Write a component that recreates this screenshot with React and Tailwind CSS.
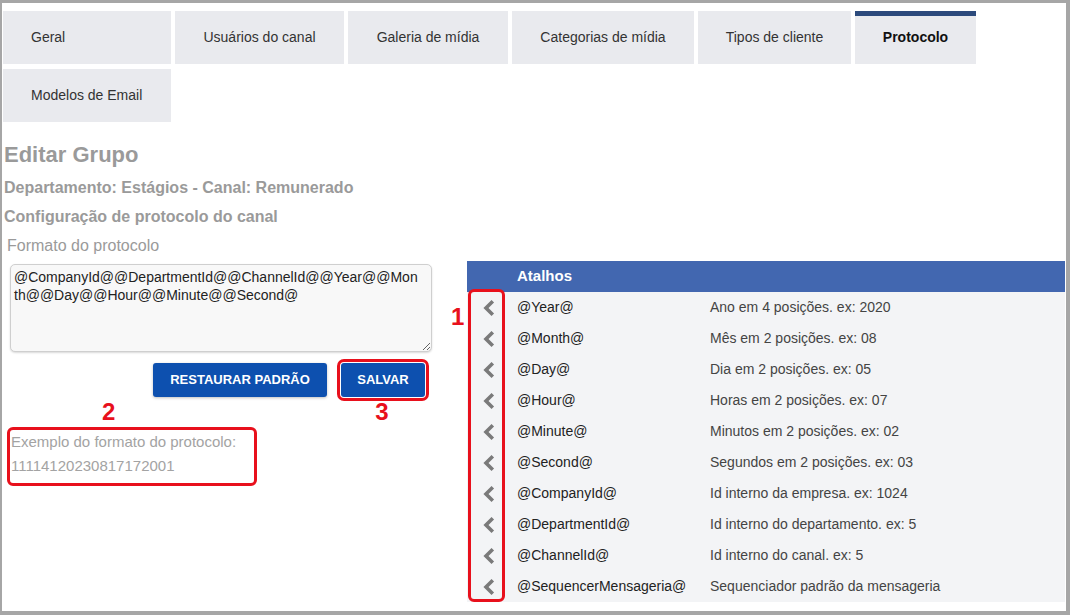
import { useState } from "react";

const TABS = [
  { label: "Geral", cls: "w-[168px] justify-start pl-[28px]" },
  { label: "Usuários do canal", cls: "w-[169px] justify-center" },
  { label: "Galeria de mídia", cls: "w-[160px] justify-center" },
  { label: "Categorias de mídia", cls: "w-[182px] justify-center" },
  { label: "Tipos de cliente", cls: "w-[153px] justify-center" },
  { label: "Protocolo", cls: "w-[121px] justify-center" },
  { label: "Modelos de Email", cls: "w-[168px] justify-start pl-[28px]" },
];

const SHORTCUTS = [
  ["@Year@", "Ano em 4 posições. ex: 2020"],
  ["@Month@", "Mês em 2 posições. ex: 08"],
  ["@Day@", "Dia em 2 posições. ex: 05"],
  ["@Hour@", "Horas em 2 posições. ex: 07"],
  ["@Minute@", "Minutos em 2 posições. ex: 02"],
  ["@Second@", "Segundos em 2 posições. ex: 03"],
  ["@CompanyId@", "Id interno da empresa. ex: 1024"],
  ["@DepartmentId@", "Id interno do departamento. ex: 5"],
  ["@ChannelId@", "Id interno do canal. ex: 5"],
  ["@SequencerMensageria@", "Sequenciador padrão da mensageria"],
];

const DEFAULT_FORMAT =
  "@CompanyId@@DepartmentId@@ChannelId@@Year@@Month@@Day@@Hour@@Minute@@Second@";

function ChevronLeft() {
  return (
    <svg width="13" height="18" viewBox="0 0 13 18" fill="none">
      <path
        d="M10.8 2.3 L4 9 L10.8 15.7"
        stroke="#7a7a7a"
        strokeWidth="3.6"
        strokeLinejoin="miter"
      />
    </svg>
  );
}

export default function App() {
  const [active, setActive] = useState("Protocolo");
  const [format, setFormat] = useState(DEFAULT_FORMAT);

  return (
    <div
      className="w-[1070px] h-[615px] overflow-hidden bg-white border-t-[3px] border-l-2 border-r-4 border-b-4 border-[#a6a6a6] text-[#333]"
      style={{ fontFamily: '"Liberation Sans", Arial, sans-serif' }}
    >
      {/* TABS */}
      <div className="flex flex-wrap gap-x-1 gap-y-[5px] pt-2 pl-px">
        {TABS.map((t) => (
          <button
            key={t.label}
            onClick={() => setActive(t.label)}
            className={`flex items-center h-[53px] bg-[#e9eaee] text-[14px] ${t.cls} ${
              active === t.label
                ? "font-bold text-[#111] shadow-[inset_0_5px_0_#2c4a7c]"
                : "text-[#333]"
            }`}
          >
            {t.label}
          </button>
        ))}
      </div>

      <h1 className="mt-5 ml-[2px] text-[22px] leading-[26px] font-bold text-[#9a9a9a]">
        Editar Grupo
      </h1>
      <h2 className="mt-[10px] ml-[2px] text-[16px] leading-5 font-bold text-[#9a9a9a]">
        Departamento: Estágios - Canal: Remunerado
      </h2>
      <h3 className="mt-[9px] ml-[2px] text-[16px] leading-5 font-bold text-[#9a9a9a]">
        Configuração de protocolo do canal
      </h3>

      <div className="flex">
        {/* LEFT */}
        <div className="w-[465px] shrink-0">
          <label className="block mt-[9px] ml-[5px] text-[16px] leading-5 text-[#9a9a9a]">
            Formato do protocolo
          </label>
          <textarea
            value={format}
            onChange={(e) => setFormat(e.target.value)}
            className="block mt-2 ml-2 w-[422px] h-[88px] pl-[3px] pr-[10px] pt-[3px] text-[14px] leading-[18px] text-[#222] bg-[#f8f8f8] border border-[#cfcfcf] rounded-[5px] shadow-[0_1px_2px_rgba(0,0,0,0.15)] outline-none"
          />

          <div className="flex gap-[14px] mt-[11px] ml-[151px]">
            <button
              onClick={() => setFormat(DEFAULT_FORMAT)}
              className="w-[174px] h-[34px] rounded-[3px] bg-[#0d50af] text-white text-[13px] font-bold shadow-[0_1px_3px_rgba(0,0,0,0.25)]"
            >
              RESTAURAR PADRÃO
            </button>
            <button className="w-[84px] h-[34px] rounded-[3px] bg-[#0d50af] text-white text-[13px] font-bold outline-[3px] outline-solid outline-[#e8101c] outline-offset-1">
              SALVAR
            </button>
          </div>

          <div className="flex mt-[3px] text-[24px] leading-6 font-bold text-[#e8101c]">
            <span className="ml-[100px]">2</span>
            <span className="ml-[260px]">3</span>
          </div>

          <div className="mt-[3px] ml-[5px] w-[250px] h-[59px] border-[3px] border-[#e8101c] rounded-md pl-px text-[15px] leading-6 text-[#a3a3a3]">
            <div>Exemplo do formato do protocolo:</div>
            <div>11114120230817172001</div>
          </div>
        </div>

        {/* RIGHT: ATALHOS */}
        <div className="flex-1 mt-[34px] mr-px">
          <div className="flex items-center h-[31px] bg-[#4267b0] text-white text-[15px] font-bold">
            <div className="w-[50px] shrink-0" />
            <div>Atalhos</div>
          </div>
          <div className="relative bg-[#f3f4f6] text-[14px]">
            {SHORTCUTS.map(([key, desc]) => (
              <div
                key={key}
                onClick={() =>
                  setFormat((f) => f + key)
                }
                className="flex items-center h-[31px] cursor-pointer"
              >
                <div className="w-[50px] shrink-0 pl-[15px] flex items-center">
                  <ChevronLeft />
                </div>
                <div className="w-[193px] shrink-0 text-[#222]">{key}</div>
                <div className="text-[#444]">{desc}</div>
              </div>
            ))}

            {/* annotation 1 */}
            <div className="absolute left-px -top-[3px] w-[37px] bottom-0 border-[3px] border-[#e8101c] rounded-md pointer-events-none" />
            <span className="absolute -left-4 top-[13px] text-[24px] leading-6 font-bold text-[#e8101c]">
              1
            </span>
          </div>
        </div>
      </div>
    </div>
  );
}
